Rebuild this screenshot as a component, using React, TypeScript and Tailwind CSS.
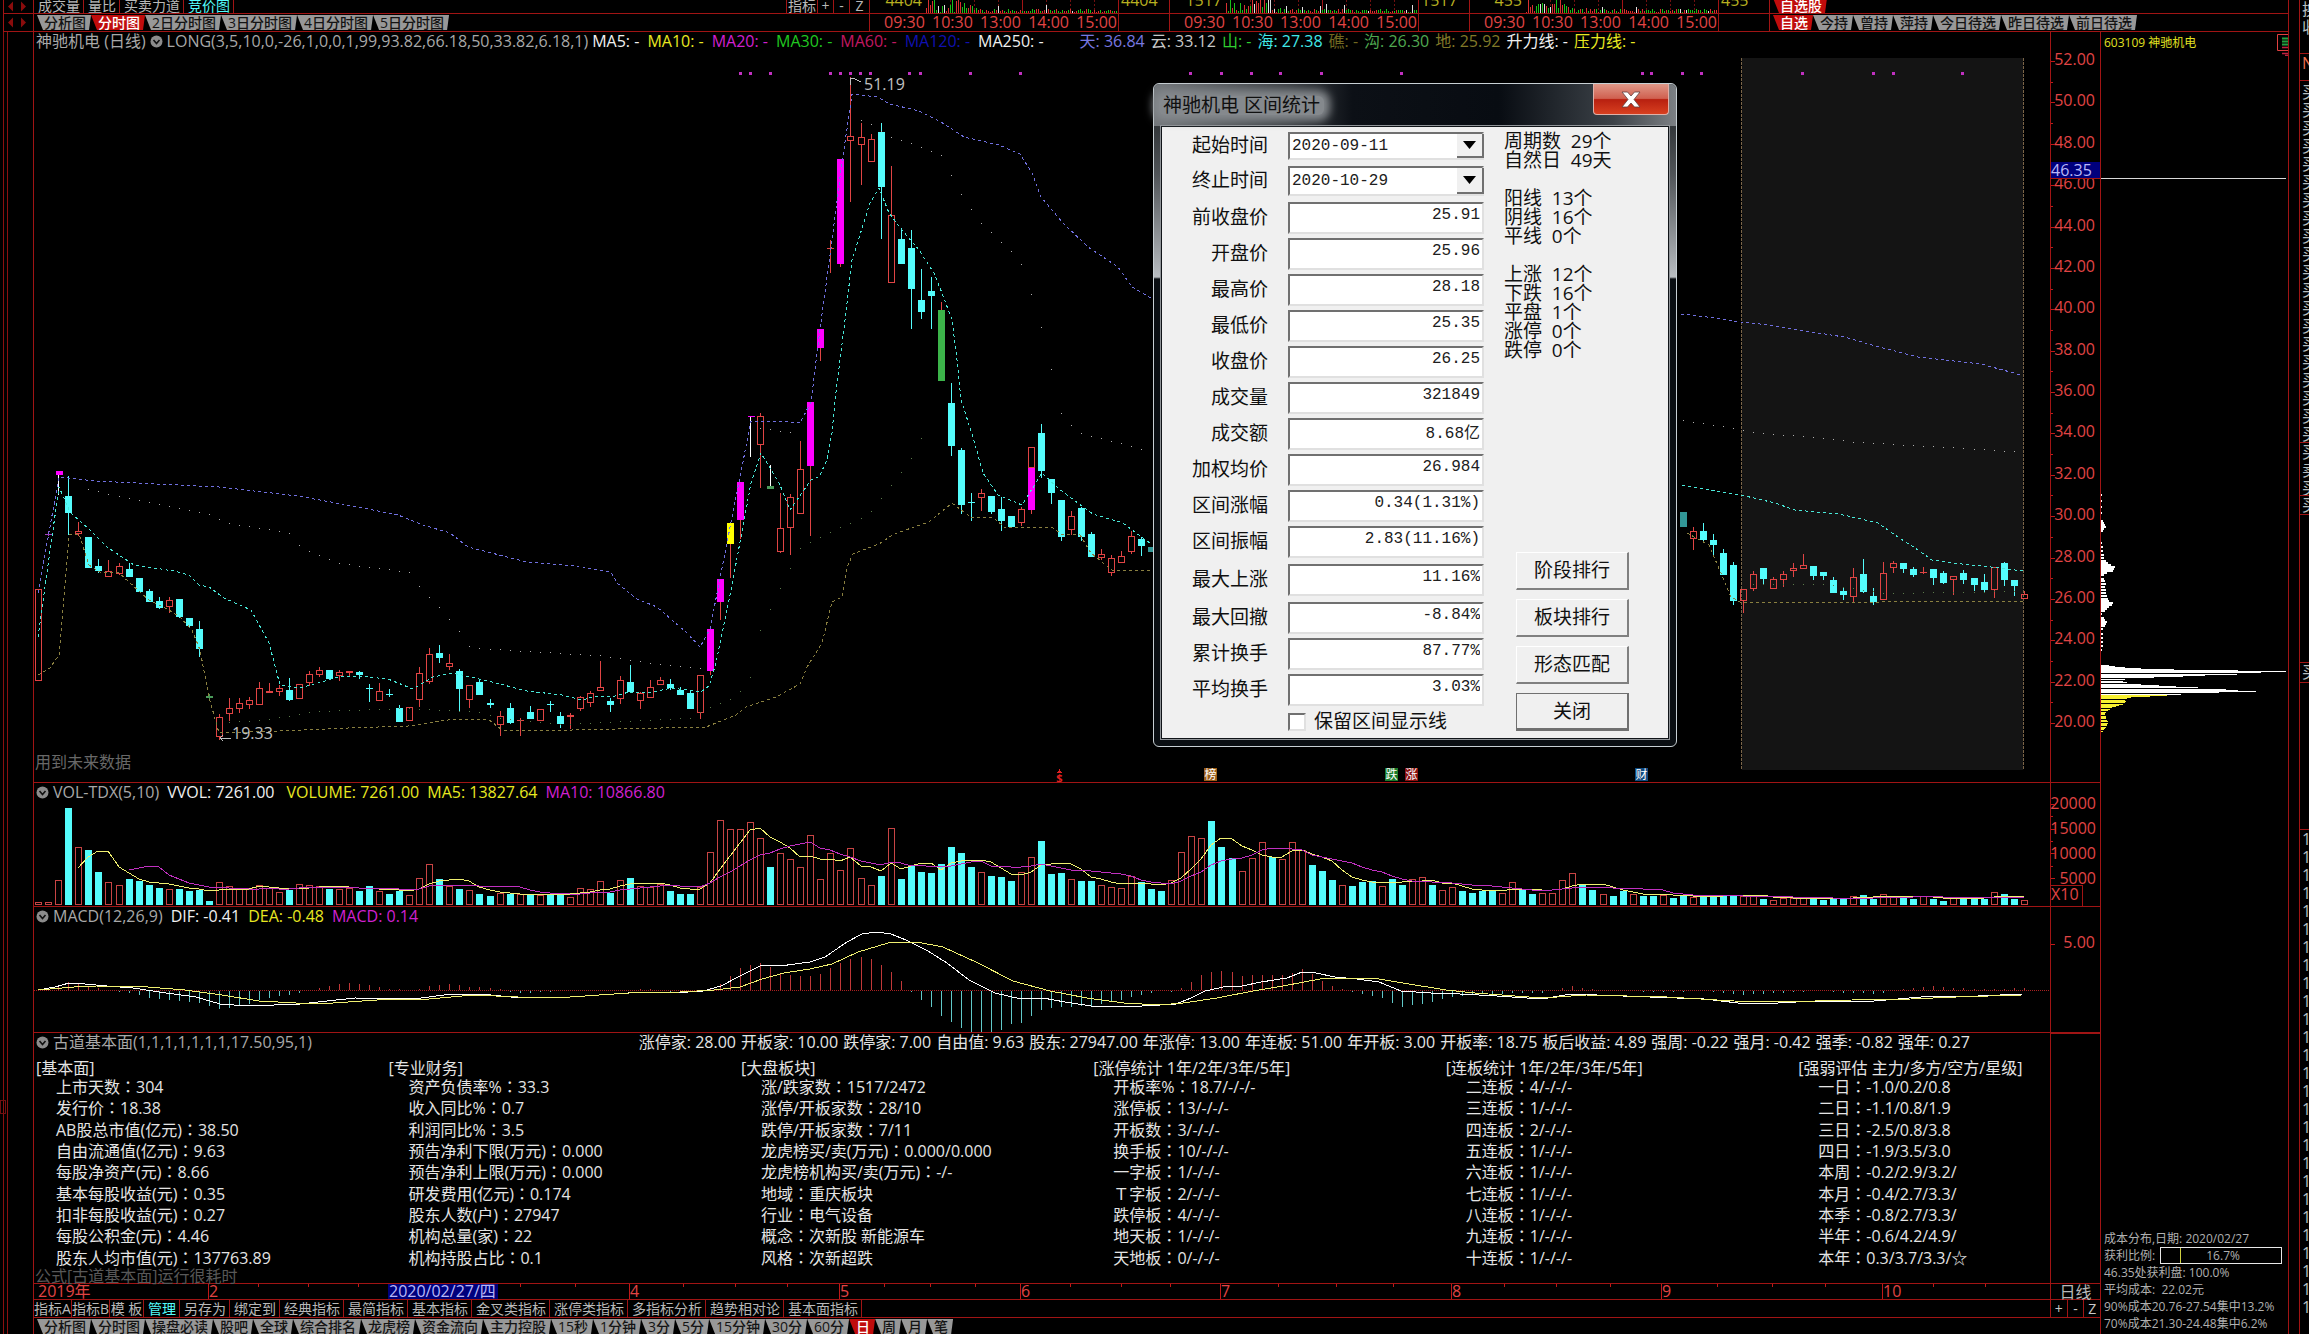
import React from 'react';

type Kind = 'r' | 'c' | 'm' | 'y' | 'g' | 'd' | 'x' | 'p';
type Candle = [number, Kind, number, number, number, number];
type Pt = [number, number];

const X0 = 38.3;
const STEP = 10.027;
const xAt = (i: number) => Math.round(X0 + STEP * i);

const COLORS: Record<Kind, string> = {
  r: '#e04444',
  c: '#54fcfc',
  m: '#ff00ff',
  y: '#ffff00',
  g: '#3cb44a',
  d: '#54fcfc',
  x: '#e04444',
  p: '#a040c0',
};

/* index, kind, high, body top, body bottom, low */
const CANDLES: Candle[] = [
  [0, 'r', 589, 589, 681, 681], [1, 'p', 531, 534, 534, 536], [3, 'c', 476, 496, 513, 535],
  [4, 'r', 522, 531, 534, 536], [5, 'c', 537, 537, 568, 568], [6, 'c', 559, 566, 571, 573], [7, 'r', 560, 571, 577, 577],
  [8, 'r', 563, 566, 574, 575], [9, 'c', 563, 569, 577, 577], [10, 'c', 578, 578, 592, 592], [11, 'c', 589, 591, 602, 602],
  [12, 'c', 597, 601, 608, 609], [13, 'r', 597, 600, 607, 613], [14, 'c', 599, 599, 617, 618], [15, 'c', 618, 618, 626, 628],
  [16, 'c', 621, 629, 649, 657], [18, 'r', 714, 717, 737, 740], [19, 'r', 698, 708, 714, 721],
  [20, 'r', 698, 703, 709, 713], [21, 'r', 697, 700, 705, 709], [22, 'r', 682, 688, 705, 705], [23, 'r', 683, 691, 693, 693],
  [24, 'r', 685, 688, 692, 696], [25, 'c', 678, 690, 700, 701], [26, 'r', 684, 684, 699, 699], [27, 'r', 671, 674, 683, 686],
  [28, 'r', 667, 670, 675, 677], [29, 'c', 670, 670, 679, 679], [30, 'r', 670, 672, 676, 681], [31, 'r', 671, 671, 673, 676],
  [32, 'c', 671, 672, 675, 679], [33, 'd', 684, 688, 688, 702], [34, 'r', 683, 691, 701, 701], [35, 'd', 689, 694, 694, 697],
  [36, 'c', 705, 708, 722, 722], [37, 'r', 707, 707, 721, 721], [38, 'r', 667, 673, 700, 707], [39, 'r', 648, 654, 682, 684],
  [40, 'c', 645, 653, 658, 663], [41, 'r', 654, 663, 667, 670], [42, 'c', 669, 671, 689, 712], [43, 'r', 685, 685, 700, 708],
  [44, 'c', 679, 682, 695, 695], [45, 'c', 699, 703, 705, 708], [46, 'r', 711, 716, 725, 736], [47, 'c', 703, 708, 723, 724],
  [48, 'x', 718, 720, 720, 736], [49, 'c', 706, 712, 719, 719], [50, 'r', 709, 709, 721, 721], [51, 'd', 701, 704, 704, 712],
  [52, 'c', 712, 716, 724, 728], [53, 'r', 713, 715, 717, 729], [54, 'r', 696, 697, 709, 711], [55, 'r', 691, 693, 703, 707],
  [56, 'r', 661, 687, 691, 691], [57, 'c', 698, 701, 705, 712], [58, 'r', 676, 680, 699, 704], [59, 'c', 665, 682, 692, 693],
  [60, 'r', 692, 693, 701, 709], [61, 'r', 680, 687, 698, 698], [62, 'r', 677, 680, 685, 685], [63, 'c', 679, 684, 688, 690],
  [64, 'c', 687, 690, 695, 695], [65, 'c', 691, 693, 709, 709], [66, 'r', 675, 675, 713, 719], [67, 'm', 629, 629, 671, 675],
  [68, 'm', 579, 579, 602, 620], [69, 'y', 523, 523, 544, 578], [70, 'm', 482, 482, 520, 539],
  [72, 'r', 413, 416, 445, 488], [74, 'r', 493, 528, 552, 553],
  [75, 'r', 494, 497, 528, 555], [76, 'r', 441, 469, 514, 514], [77, 'm', 402, 402, 466, 536], [78, 'm', 329, 329, 348, 361],
  [79, 'x', 240, 248, 248, 273], [80, 'm', 159, 159, 264, 267], [81, 'r', 77, 136, 141, 202], [82, 'r', 123, 137, 145, 185],
  [83, 'r', 134, 139, 162, 162], [84, 'c', 123, 132, 187, 239], [85, 'r', 166, 215, 283, 283], [86, 'c', 228, 239, 264, 264],
  [87, 'c', 230, 248, 289, 329], [88, 'c', 269, 300, 312, 319], [89, 'c', 277, 291, 296, 329], [90, 'g', 302, 310, 381, 381],
  [91, 'c', 383, 403, 446, 456], [92, 'c', 448, 450, 505, 514], [93, 'd', 493, 502, 502, 521], [94, 'r', 489, 493, 498, 511],
  [95, 'c', 496, 496, 512, 514], [96, 'c', 497, 509, 521, 531], [97, 'c', 516, 516, 527, 527], [98, 'r', 507, 509, 523, 526],
  [99, 'r', 447, 447, 468, 514], [99, 'm', 468, 468, 510, 514], [100, 'c', 424, 433, 471, 478], [101, 'c', 479, 479, 493, 504],
  [102, 'c', 500, 500, 537, 541], [103, 'r', 511, 516, 530, 535], [104, 'c', 507, 508, 537, 541], [105, 'c', 532, 534, 557, 557],
  [106, 'r', 549, 554, 558, 560], [107, 'r', 555, 558, 573, 576], [108, 'r', 551, 556, 563, 563], [109, 'r', 531, 536, 552, 554],
  [110, 'c', 537, 539, 546, 556], [111, 'c', 547, 547, 552, 552],
  [164, 'c', 512, 512, 527, 527], [165, 'r', 527, 531, 539, 550], [166, 'c', 523, 531, 540, 543], [167, 'c', 534, 540, 545, 557],
  [168, 'c', 549, 553, 575, 575], [169, 'c', 562, 565, 601, 605], [170, 'r', 589, 589, 601, 613], [171, 'r', 571, 574, 589, 591],
  [172, 'c', 568, 568, 579, 585], [173, 'r', 577, 579, 589, 589], [174, 'r', 571, 574, 580, 587], [175, 'r', 563, 568, 571, 577],
  [176, 'r', 554, 565, 569, 569], [177, 'c', 566, 566, 576, 580], [178, 'c', 572, 572, 576, 580], [179, 'c', 577, 580, 593, 593],
  [180, 'c', 588, 591, 595, 600], [181, 'r', 568, 577, 597, 602], [182, 'c', 559, 574, 592, 593], [183, 'c', 588, 596, 602, 605],
  [184, 'r', 562, 573, 600, 600], [185, 'r', 561, 563, 568, 573], [186, 'c', 563, 563, 569, 573], [187, 'c', 567, 569, 575, 577],
  [188, 'x', 567, 572, 572, 574], [189, 'c', 569, 569, 578, 585], [190, 'c', 571, 573, 583, 584], [191, 'r', 576, 576, 580, 595],
  [192, 'c', 570, 573, 580, 584], [193, 'c', 578, 578, 585, 591], [194, 'c', 574, 582, 590, 592], [195, 'r', 567, 567, 590, 598],
  [196, 'c', 562, 563, 580, 586], [197, 'c', 580, 580, 586, 596], [198, 'r', 591, 594, 599, 599],
];

const SKY: Pt[][] = [
  [[38, 593], [59, 477], [95, 481], [219, 487], [298, 496], [358, 507], [398, 515], [423, 525], [450, 533], [468, 547], [527, 562], [577, 566], [611, 572], [617, 583], [637, 599], [657, 607], [687, 633], [700, 647], [710, 629], [751, 421], [780, 421], [800, 423], [811, 402], [820, 329], [831, 248], [840, 177], [852, 94], [877, 97], [890, 104], [919, 111], [941, 122], [964, 137], [999, 145], [1020, 154], [1032, 173], [1041, 197], [1063, 223], [1088, 247], [1118, 267], [1132, 287], [1151, 298]],
  [[1681, 314], [1707, 317], [1741, 322], [1770, 325], [1805, 331], [1844, 337], [1883, 348], [1918, 357], [1981, 364], [2021, 375]],
];
const SEA: Pt[][] = [
  [[38, 637], [59, 487], [70, 512], [90, 530], [107, 547], [134, 565], [174, 571], [189, 575], [199, 585], [209, 587], [224, 598], [251, 610], [269, 643], [280, 685], [299, 688], [318, 683], [338, 677], [358, 676], [388, 679], [413, 689], [433, 677], [453, 673], [488, 681], [527, 691], [562, 695], [582, 700], [597, 696], [612, 697], [629, 692], [647, 693], [672, 688], [701, 692], [709, 686], [716, 663], [731, 590], [741, 537], [751, 483], [761, 453], [780, 485], [790, 510], [811, 480], [819, 477], [827, 460], [832, 433], [835, 400], [845, 320], [852, 260], [870, 203], [879, 188], [889, 213], [902, 230], [919, 250], [934, 273], [942, 293], [952, 320], [957, 360], [961, 400], [973, 437], [983, 473], [998, 495], [1022, 505], [1042, 473], [1058, 488], [1083, 507], [1093, 514], [1123, 523], [1140, 536], [1150, 543]],
  [[1682, 485], [1741, 495], [1775, 503], [1795, 510], [1839, 514], [1878, 523], [1898, 537], [1918, 550], [1932, 560], [1952, 563], [1991, 567], [2023, 571]],
];
const EARTH: Pt[][] = [
  [[38, 675], [50, 668], [59, 655], [69, 535], [79, 534], [89, 565], [100, 572], [119, 573], [149, 600], [169, 610], [180, 617], [192, 630], [200, 650], [209, 697], [219, 733], [279, 731], [348, 728], [408, 726], [448, 720], [488, 719], [502, 730], [527, 731], [617, 729], [706, 727], [736, 715], [746, 707], [776, 697], [800, 684], [807, 667], [822, 643], [832, 602], [842, 597], [847, 567], [853, 554], [879, 544], [894, 534], [929, 522], [952, 503], [961, 510], [971, 517], [993, 517], [1004, 527], [1052, 527], [1061, 534], [1080, 535], [1091, 553], [1113, 571], [1150, 570]],
  [[1687, 533], [1709, 545], [1731, 597], [1742, 603], [2023, 601]],
];
const CLOUD: Pt[][] = [
  [[79, 487], [128, 498], [189, 510], [209, 514], [229, 523], [291, 533], [300, 547], [318, 555], [338, 563], [409, 572], [419, 586], [439, 607], [459, 631], [470, 647], [522, 651], [597, 655], [652, 663], [706, 669]],
  [[760, 428], [799, 433]],
  [[861, 120], [870, 123], [890, 137], [910, 143], [941, 155], [962, 196], [981, 223], [1012, 252], [1022, 265], [1042, 330], [1062, 417], [1081, 433], [1142, 449]],
  [[1682, 420], [1741, 429], [1753, 432], [1834, 439], [1854, 442], [1952, 447], [2023, 452]],
];
const DITCH: Pt[][] = [
  [[220, 723], [269, 719], [318, 711], [408, 708], [480, 712], [500, 718], [560, 724], [690, 718], [701, 711], [736, 697], [750, 677], [760, 630], [780, 588], [800, 548], [829, 532], [869, 514], [910, 460], [921, 438]],
  [[1753, 584], [1824, 584], [1883, 593], [2023, 591]],
];
const PINK_DOTS = [740, 750, 770, 830, 840, 850, 860, 870, 909, 920, 970, 1020, 1190, 1221, 1251, 1280, 1321, 1401, 1642, 1651, 1682, 1701, 1802, 1873, 1893, 1962];

const VOL: number[] = [
  2, 2, 24, 97, 57, 55, 33, 22, 19, 26, 24, 20, 17, 15, 16, 14, 15, 4, 22, 18, 16, 16, 19, 16, 12, 15, 20, 19, 18, 16, 15, 16, 14, 19, 13, 11, 14, 9, 26, 40, 26, 18, 16, 14, 11, 9, 11, 11, 10, 11, 9, 11, 10, 7, 16, 15, 23, 12, 24, 27, 18, 17, 20, 14, 11, 11, 17, 52, 84, 75, 75, 82, 66, 38, 51, 45, 37, 69, 25, 51, 34, 56, 26, 19, 29, 76, 26, 39, 33, 32, 41, 58, 52, 38, 32, 29, 28, 24, 32, 47, 64, 31, 32, 25, 24, 24, 19, 17, 16, 28, 23, 16,
  14, 24, 52, 68, 66, 84, 58, 47, 33, 46, 62, 48, 45, 62, 54, 40, 34, 25, 19, 19, 23, 24, 18, 26, 20, 25, 27, 20, 14, 17, 14, 12, 14, 14, 11, 22, 16, 11, 11, 11, 24, 31, 21, 15, 10, 9, 14, 10, 9, 9, 9, 7, 9, 7, 8, 8, 10, 10, 8, 9, 6, 4, 6, 6, 6, 6, 5, 6, 6, 8, 10, 6, 10, 8, 8, 6, 8, 6, 4, 6, 6, 6, 6, 12, 11, 6, 4,
];
/* r: rising day, c: falling day */
const VOL_SIDE =
  'rrrcrccrrccccrcccc' +
  'rrrrrrrcrrrcrrccrc' +
  'crrrcrcrccrcrcrccr' +
  'rrrcrcrrrcccrrrrrr' +
  'rcrrrrrrrrrrcrcccc' +
  'ccccrcccrrcccrccrrrrcc' +
  'crrrrcccrrrcrrrcccrccc' +
  'rccrrcrrccccrrccrrrrcc' +
  'rccrccrccrccccrrcrrrrc' +
  'cccrccrrccrccrcccrccr';
const volUp = (i: number) => VOL_SIDE.charAt(i) === 'r';

const DIF: Pt[] = [[38, 990], [55, 987], [69, 983], [85, 984], [107, 986], [133, 988], [159, 992], [196, 997], [220, 1004], [248, 1006], [274, 1005], [300, 1004], [318, 1002], [355, 998], [414, 999], [451, 994], [481, 994], [521, 998], [570, 997], [614, 994], [643, 992], [673, 993], [703, 991], [721, 986], [740, 976], [762, 965], [780, 966], [810, 962], [825, 957], [847, 942], [862, 934], [876, 932], [891, 934], [906, 940], [928, 951], [947, 963], [969, 980], [995, 993], [1021, 999], [1043, 998], [1065, 1002], [1091, 1006], [1124, 1007], [1160, 1005], [1176, 1004], [1191, 998], [1205, 991], [1228, 986], [1242, 986], [1261, 982], [1287, 978], [1302, 972], [1316, 973], [1335, 977], [1357, 979], [1379, 982], [1401, 991], [1431, 993], [1460, 994], [1497, 996], [1542, 999], [1571, 994], [1623, 996], [1704, 999], [1738, 1003], [1778, 1003], [1815, 1001], [1874, 1001], [1933, 996], [1978, 996], [2022, 994]];
const DEA: Pt[] = [[38, 990], [74, 987], [96, 986], [148, 987], [185, 990], [222, 995], [259, 1001], [296, 1003], [333, 1003], [392, 999], [429, 999], [473, 995], [518, 997], [570, 997], [629, 993], [680, 992], [714, 990], [740, 987], [762, 979], [784, 973], [810, 969], [832, 964], [858, 952], [888, 943], [917, 942], [943, 947], [976, 962], [1013, 981], [1050, 991], [1087, 998], [1124, 1003], [1160, 1005], [1183, 1003], [1217, 998], [1253, 991], [1283, 986], [1320, 979], [1350, 978], [1379, 979], [1409, 984], [1446, 990], [1475, 993], [1542, 998], [1586, 995], [1667, 997], [1734, 1001], [1778, 1002], [1852, 1000], [1911, 999], [1956, 997], [2022, 995]];

const str = (p: Pt[]) => p.map((q) => q.join(',')).join(' ');
function sample(p: Pt[], x: number) {
  for (let k = 1; k < p.length; k++) {
    if (x <= p[k][0]) {
      const [ax, ay] = p[k - 1];
      const [bx, by] = p[k];
      return ay + ((by - ay) * (x - ax)) / (bx - ax);
    }
  }
  return p[p.length - 1][1];
}
function movingAverage(n: number): Pt[] {
  const out: Pt[] = [];
  for (let i = n - 1; i < VOL.length; i++) {
    let s = 0;
    for (let k = 0; k < n; k++) s += VOL[i - k];
    out.push([xAt(i), Math.round(904 - s / n)]);
  }
  return out;
}

function CandleShape({ c }: { c: Candle }) {
  const [i, kind, hi, top, bot, lo] = c;
  const x = xAt(i);
  const color = COLORS[kind];
  if (kind === 'd' || kind === 'x' || kind === 'p')
    return (
      <g fill={color}>
        <rect x={x} y={hi} width={1} height={lo - hi} />
        <rect x={x - 3} y={top} width={7} height={1} />
      </g>
    );
  if (kind === 'r')
    return (
      <g fill={color}>
        <rect x={x} y={hi} width={1} height={top - hi} />
        <rect x={x} y={bot} width={1} height={lo - bot} />
        <rect x={x - 2.5} y={top + 0.5} width={6} height={Math.max(bot - top - 1, 1)} fill="none" stroke={color} />
      </g>
    );
  return (
    <g opacity={i === 164 || i === 111 ? 0.6 : 1}>
      <rect x={x} y={hi} width={1} height={lo - hi} fill={kind === 'c' ? color : '#e04444'} />
      <rect x={x - 3} y={top} width={7} height={bot - top} fill={color} />
    </g>
  );
}

function Dots({ line, color }: { line: Pt[]; color: string }) {
  const from = line[0][0];
  const to = line[line.length - 1][0];
  const xs: number[] = [];
  for (let i = 0; i < 199; i++) if (xAt(i) >= from && xAt(i) <= to) xs.push(xAt(i));
  return (
    <g fill={color}>
      {xs.map((x) => (
        <rect key={x} x={x} y={Math.round(sample(line, x))} width={1} height={1} />
      ))}
    </g>
  );
}

const chartFont = { fontFamily: '"Open Sans", "Noto Sans CJK SC", sans-serif' };

function Mark({ x, fill, children }: { x: number; fill: string; children: string }) {
  return (
    <g>
      <rect x={x} y={768} width={13} height={13} fill={fill} />
      <text x={x + 6.5} y={779} fontSize={12} fill="#fff" textAnchor="middle" style={chartFont}>{children}</text>
    </g>
  );
}

function PriceChart() {
  return (
    <svg className="absolute inset-0 h-full w-full" viewBox="34 32 2016 750" preserveAspectRatio="none" shapeRendering="crispEdges">
      <rect x={1742} y={58} width={281} height={712} fill="#141414" />
      <path d="M1741.5 58V770M2023.5 58V770" stroke="#7a6448" strokeDasharray="3 1" fill="none" />
      {PINK_DOTS.map((x) => <rect key={x} x={x - 1} y={72} width={3} height={3} fill="#c030c0" />)}
      {CANDLES.map((c, k) => <CandleShape key={k} c={c} />)}
      <g fill="#ff00ff">
        <rect x={56} y={471} width={7} height={4} />
        <rect x={748} y={416} width={7} height={1} />
      </g>
      <g fill="#ffffff">
        <rect x={58} y={475} width={1} height={20} />
        <rect x={750} y={417} width={1} height={40} />
        <rect x={770} y={465} width={1} height={21} />
      </g>
      <g fill="#4a9a5a">
        <rect x={767} y={486} width={7} height={3} />
        <rect x={206} y={696} width={7} height={2} />
        <rect x={209} y={694} width={1} height={6} />
      </g>
      <g fill="none" strokeWidth={1}>
        {SKY.map((l, k) => <polyline key={k} points={str(l)} stroke="#7070e0" strokeDasharray="3 3" />)}
        {SEA.map((l, k) => <polyline key={k} points={str(l)} stroke="#48e8d8" strokeDasharray="3 3" />)}
        {EARTH.map((l, k) => <polyline key={k} points={str(l)} stroke="#8a8040" strokeDasharray="3 3" />)}
      </g>
      {CLOUD.map((l, k) => <Dots key={k} line={l} color="#b0b0b0" />)}
      {DITCH.map((l, k) => <Dots key={k} line={l} color="#5a7a4a" />)}
      <path d="M850.5 85V78H853M853 78L861 82" stroke="#c0c0c0" fill="none" />
      <path d="M220 738H231M220 738L223 735M220 738L223 741" stroke="#c0c0c0" fill="none" />
      <g fontSize={16} fill="#c0c0c0" style={chartFont}>
        <text x={864} y={90}>51.19</text>
        <text x={232} y={739}>19.33</text>
      </g>
      <g fill="#e02020">
        <path d="M1059.5 769L1062 773H1057Z" />
        <text x={1059.5} y={782} fontSize={11} fontWeight={700} textAnchor="middle" style={chartFont}>$</text>
      </g>
      <Mark x={1204} fill="#9a5c18">榜</Mark>
      <Mark x={1385} fill="#1a7a2a">跌</Mark>
      <Mark x={1405} fill="#8a1010">涨</Mark>
      <Mark x={1635} fill="#104a80">财</Mark>
    </svg>
  );
}

function VolumeChart() {
  return (
    <svg className="absolute inset-0 h-full w-full" viewBox="34 783 2016 123" preserveAspectRatio="none" shapeRendering="crispEdges">
      {VOL.map((h, i) =>
        volUp(i) ? (
          <rect key={i} x={xAt(i) - 2.5} y={904.5 - h} width={6} height={h} fill="none" stroke="#c84444" />
        ) : (
          <rect key={i} x={xAt(i) - 3} y={905 - h} width={7} height={h} fill="#54fcfc" />
        ),
      )}
      <polyline points={str(movingAverage(5))} fill="none" stroke="#f0f070" />
      <polyline points={str(movingAverage(10))} fill="none" stroke="#c030c0" />
    </svg>
  );
}

function MacdChart() {
  return (
    <svg className="absolute inset-0 h-full w-full" viewBox="34 907 2016 125" preserveAspectRatio="none" shapeRendering="crispEdges">
      <path d="M34 990.5H2050" stroke="#a82020" strokeDasharray="1 1" />
      {VOL.map((_, i) => {
        const x = xAt(i);
        const d = Math.round(2 * (sample(DEA, x) - sample(DIF, x)));
        return d > 0 ? (
          <rect key={i} x={x} y={990 - d} width={1} height={d} fill="#c03838" />
        ) : (
          <rect key={i} x={x} y={991} width={1} height={-d} fill="#60c8c8" />
        );
      })}
      <polyline points={str(DIF)} fill="none" stroke="#ffffff" />
      <polyline points={str(DEA)} fill="none" stroke="#f0f070" />
    </svg>
  );
}

function Chevron() {
  return (
    <svg className="h-[13px] w-[13px] shrink-0" viewBox="0 0 13 13">
      <circle cx="6.5" cy="6.5" r="6" fill="#8c8c8c" />
      <path d="M3.5 5L6.5 8.5L9.5 5" fill="none" stroke="#101010" strokeWidth="1.6" />
    </svg>
  );
}

function Axis({ children, className = '' }: { children?: React.ReactNode; className?: string }) {
  return <div className={'relative w-[51px] shrink-0 border-x border-[#a01414] text-base text-[#e04444] ' + className}>{children}</div>;
}

function Ticks({ from, step, count, height }: { from: number; step: number; count: number; height: number }) {
  return (
    <svg className="absolute inset-0 h-full w-full" viewBox={`0 0 49 ${height}`} preserveAspectRatio="none" shapeRendering="crispEdges">
      {Array.from({ length: count }, (_, k) => (
        <rect key={k} x={0} y={Math.round(from + step * k)} width={k % 2 ? 2 : 4} height={1} fill="#c01818" />
      ))}
    </svg>
  );
}

function Tab({ children, active = false }: { children: string; active?: boolean }) {
  return (
    <button
      type="button"
      className={
        'h-[15px] shrink-0 whitespace-nowrap pl-[7px] pr-[5px] text-sm leading-[15px] font-medium [clip-path:polygon(0_0,100%_0,calc(100%-2px)_100%,6px_100%)] ' +
        (active ? 'bg-[#c00c0c] text-white' : 'bg-[#989898] text-[#141414]')
      }
    >
      {children}
    </button>
  );
}

function Cell({ children, active = false }: { children: string; active?: boolean }) {
  return (
    <button
      type="button"
      className={'h-full shrink-0 whitespace-nowrap border-r border-[#a01414] pl-1 pr-[3px] text-sm leading-[17px] ' + (active ? 'text-[#54fcfc]' : 'text-[#b8b8b8]')}
    >
      {children}
    </button>
  );
}

function Arrows() {
  return (
    <svg className="absolute left-[3px] top-0 h-[13px] w-[20px]" viewBox="0 0 20 13">
      <path d="M1 6.5L6 1.5V11.5ZM19 6.5L14 1.5V11.5Z" fill="#8a0c0c" />
    </svg>
  );
}

const TIMES = ['09:30', '10:30', '13:00', '14:00', '15:00'];

function MiniVolume({ seed }: { seed: number }) {
  let s = seed;
  const rnd = () => {
    s = (s * 1103515245 + 12345) % 2147483648;
    return s / 2147483648;
  };
  const bars = Array.from({ length: 96 }, (_, k) => {
    const early = Math.exp(-k / 12) * 12 + (Math.abs(k - 18) < 6 ? 8 : 0);
    const r = rnd();
    return { h: Math.min(13, Math.round(rnd() * (3 + early) + 1 + (r > 0.93 ? 5 : 0))), c: r < 0.45 ? '#18c018' : r < 0.9 ? '#d83030' : '#e0e0e0' };
  });
  return (
    <svg className="h-full w-full" viewBox="0 0 192 13" preserveAspectRatio="none" shapeRendering="crispEdges">
      <path d="M24.5 0V13M48.5 0V13M72.5 0V13M120.5 0V13M144.5 0V13M168.5 0V13" stroke="#701010" strokeDasharray="2 2" />
      <path d="M96.5 0V13" stroke="#a01414" />
      {bars.map((b, k) => <rect key={k} x={k * 2} y={13 - b.h} width={1} height={b.h} fill={b.c} />)}
    </svg>
  );
}

function MiniPanel({ label, seed }: { label: string; seed: number }) {
  return (
    <div className="flex w-[300px] shrink-0 flex-col border-l border-[#a01414]">
      <div className="flex h-[14px] overflow-hidden border-b border-[#a01414] text-base leading-4 text-[#b8b020]">
        <span className="-mt-2 w-[56px] pr-1 text-right">{label}</span>
        <div className="w-[192px]"><MiniVolume seed={seed} /></div>
        <div className="flex-1 border-l border-[#a01414] pl-[2px]"><p className="-mt-2">{label}</p></div>
      </div>
      <div className="flex h-[18px] border-b border-[#a01414] text-base leading-[17px] text-[#e04444]">
        <div className="flex w-[249px] justify-between border-r border-[#a01414] pl-[14px] pr-[1px]">
          {TIMES.map((t) => <span key={t}>{t}</span>)}
        </div>
      </div>
    </div>
  );
}

function Field({ label, value }: { label: string; value: string }) {
  return (
    <label className="flex h-8 items-center">
      <span className="w-[106px] pb-[2px] text-right">{label}</span>
      <input
        readOnly
        defaultValue={value}
        className="ml-5 h-8 w-[196px] border-2 border-b-[#e0e0e0] border-l-[#707070] border-r-[#e0e0e0] border-t-[#707070] bg-white pb-[6px] pr-[2px] text-right font-['Liberation_Mono','Noto_Sans_CJK_SC',monospace] text-base text-[#202020] outline-none"
      />
    </label>
  );
}

function DateField({ label, value, className }: { label: string; value: string; className: string }) {
  return (
    <label className={'relative flex items-center ' + className}>
      <span className="w-[106px] pb-[2px] text-right">{label}</span>
      <select
        defaultValue={value}
        className="ml-5 h-full w-[196px] appearance-none border-2 border-b-[#e0e0e0] border-l-[#707070] border-r-[#e0e0e0] border-t-[#707070] bg-white pl-[2px] font-['Liberation_Mono',monospace] text-base text-[#202020] outline-none"
      >
        <option>{value}</option>
      </select>
      <span className="pointer-events-none absolute bottom-[2px] right-0 top-[2px] flex w-[27px] items-center justify-center border-b-2 border-r-2 border-[#707070] bg-[#f0f0f0]">
        <svg className="h-[8px] w-[13px]" viewBox="0 0 13 8"><path d="M0 0H13L6.5 8Z" fill="#000" /></svg>
      </span>
    </label>
  );
}

function DialogButton({ children, strong = false }: { children: string; strong?: boolean }) {
  return (
    <button
      type="button"
      className={
        'h-[38px] w-[113px] bg-[#f0f0f0] ' +
        (strong
          ? 'border-b-[3px] border-l border-r-2 border-t border-[#707070]'
          : 'border-b-2 border-l border-r-2 border-t border-b-[#808080] border-l-white border-r-[#808080] border-t-white')
      }
    >
      {children}
    </button>
  );
}

const STATS = ['周期数 29个', '自然日 49天', '', '阳线 13个', '阴线 16个', '平线 0个', '', '上涨 12个', '下跌 16个', '平盘 1个', '涨停 0个', '跌停 0个'];
const FIELDS: [string, string][][] = [
  [['前收盘价', '25.91'], ['开盘价', '25.96'], ['最高价', '28.18'], ['最低价', '25.35'], ['收盘价', '26.25'], ['成交量', '321849'], ['成交额', '8.68亿'], ['加权均价', '26.984'], ['区间涨幅', '0.34(1.31%)'], ['区间振幅', '2.83(11.16%)']],
  [['最大上涨', '11.16%']],
  [['最大回撤', '-8.84%'], ['累计换手', '87.77%'], ['平均换手', '3.03%']],
];

function StatsDialog() {
  return (
    <section
      role="dialog"
      aria-label="神驰机电 区间统计"
      className="absolute left-[1119px] top-[51px] z-10 w-[524px] rounded-md border border-[#c8d0d4] bg-[linear-gradient(180deg,#4a4e52_0px,#34383b_44px,#505458_90px,#b8bcc0_193px,#0a0e12_195px,#0a0e12_100%)] px-[7px] pb-[7px] text-[19px] leading-[19px] text-[#101010]"
    >
      <div className="-mx-[7px] flex h-[42px] items-center justify-between rounded-t-md bg-[linear-gradient(90deg,#74787c_0%,#3a3e42_26%,#0c1016_38%,#080c12_66%,#3c4248_88%,#7c8084_100%)] pl-[5px]">
        <h2 className="rounded-md bg-[#85898d] px-1 shadow-[0_0_8px_6px_#85898d]">神驰机电 区间统计</h2>
        <button type="button" aria-label="关闭窗口" className="mr-[7px] flex h-[31px] w-[76px] items-center justify-center self-start rounded-b border border-t-0 border-[#e0b0a8] bg-[linear-gradient(180deg,#e09888_0%,#d06050_48%,#b82010_52%,#d84020_100%)]">
          <svg className="h-[17px] w-[20px]" viewBox="0 0 20 17">
            <path d="M1 1H6.5L10 5L13.500 1H19L13 8.500L19 16H13.500L10 12L6.500 16H1L7 8.500Z" fill="#fff" stroke="#604040" strokeWidth="0.8" />
          </svg>
        </button>
      </div>
      <div className="flex border border-[#101418] bg-[#f0f0f0] pb-[7px] pt-[5px] outline outline-[#909498]">
        <form className="flex flex-col gap-[6px]">
          <DateField label="起始时间" value="2020-09-11" className="h-7" />
          <DateField label="终止时间" value="2020-10-29" className="h-[30px]" />
          {FIELDS.map((g, k) => (
            <div key={k} className="flex flex-col gap-1">
              {g.map(([l, v]) => <Field key={l} label={l} value={v} />)}
            </div>
          ))}
          <label className="ml-[126px] flex items-center gap-2">
            <input type="checkbox" className="h-[18px] w-[18px] appearance-none border-2 border-b-[#e0e0e0] border-l-[#707070] border-r-[#e0e0e0] border-t-[#707070] bg-white" />
            保留区间显示线
          </label>
        </form>
        <div className="ml-5 flex flex-col">
          <ul>
            {STATS.map((s, k) => <li key={k} className="h-[19px] whitespace-pre">{s.replace(' ', '  ')}</li>)}
          </ul>
          <div className="ml-3 mt-auto flex flex-col gap-[9px]">
            <DialogButton>阶段排行</DialogButton>
            <DialogButton>板块排行</DialogButton>
            <DialogButton>形态匹配</DialogButton>
            <DialogButton strong>关闭</DialogButton>
          </div>
        </div>
      </div>
    </section>
  );
}

const BASICS: { title: string; rows: [string, string][] }[] = [
  { title: '[基本面]', rows: [['上市天数', '304'], ['发行价', '18.38'], ['AB股总市值(亿元)', '38.50'], ['自由流通值(亿元)', '9.63'], ['每股净资产(元)', '8.66'], ['基本每股收益(元)', '0.35'], ['扣非每股收益(元)', '0.27'], ['每股公积金(元)', '4.46'], ['股东人均市值(元)', '137763.89']] },
  { title: '[专业财务]', rows: [['资产负债率%', '33.3'], ['收入同比%', '0.7'], ['利润同比%', '3.5'], ['预告净利下限(万元)', '0.000'], ['预告净利上限(万元)', '0.000'], ['研发费用(亿元)', '0.174'], ['股东人数(户)', '27947'], ['机构总量(家)', '22'], ['机构持股占比', '0.1']] },
  { title: '[大盘板块]', rows: [['涨/跌家数', '1517/2472'], ['涨停/开板家数', '28/10'], ['跌停/开板家数', '7/11'], ['龙虎榜买/卖(万元)', '0.000/0.000'], ['龙虎榜机构买/卖(万元)', '-/-'], ['地域', '重庆板块'], ['行业', '电气设备'], ['概念', '次新股 新能源车'], ['风格', '次新超跌']] },
  { title: '[涨停统计 1年/2年/3年/5年]', rows: [['开板率%', '18.7/-/-/-'], ['涨停板', '13/-/-/-'], ['开板数', '3/-/-/-'], ['换手板', '10/-/-/-'], ['一字板', '1/-/-/-'], ['Ｔ字板', '2/-/-/-'], ['跌停板', '4/-/-/-'], ['地天板', '1/-/-/-'], ['天地板', '0/-/-/-']] },
  { title: '[连板统计 1年/2年/3年/5年]', rows: [['二连板', '4/-/-/-'], ['三连板', '1/-/-/-'], ['四连板', '2/-/-/-'], ['五连板', '1/-/-/-'], ['六连板', '1/-/-/-'], ['七连板', '1/-/-/-'], ['八连板', '1/-/-/-'], ['九连板', '1/-/-/-'], ['十连板', '1/-/-/-']] },
  { title: '[强弱评估 主力/多方/空方/星级]', rows: [['一日', '-1.0/0.2/0.8'], ['二日', '-1.1/0.8/1.9'], ['三日', '-2.5/0.8/3.8'], ['四日', '-1.9/3.5/3.0'], ['本周', '-0.2/2.9/3.2/'], ['本月', '-0.4/2.7/3.3/'], ['本季', '-0.8/2.7/3.3/'], ['半年', '-0.6/4.2/4.9/'], ['本年', '0.3/3.7/3.3/☆']] },
];

const MONTHS: [number, string][] = [[208, '2'], [629, '4'], [839, '5'], [1020, '6'], [1220, '7'], [1451, '8'], [1661, '9'], [1882, '10']];
const MINOR = [258, 308, 358, 520, 575, 683, 735, 787, 884, 930, 975, 1070, 1121, 1170, 1278, 1336, 1393, 1504, 1556, 1610, 1717, 1772, 1825, 1933, 1985];

/* y, width */
const CHIPS_THIN: Pt[] = [
  [494, 1], [500, 1], [506, 1], [512, 1], [520, 2], [522, 3], [524, 4], [526, 5], [528, 3], [530, 2], [542, 1], [546, 2], [550, 2], [554, 3], [557, 3], [560, 5], [562, 7], [564, 10], [566, 14], [568, 13], [570, 12], [572, 6], [574, 3],
  [578, 3], [580, 4], [583, 5], [586, 4], [589, 5], [592, 5], [595, 6], [598, 7], [600, 8], [602, 12], [604, 11], [606, 8], [608, 6], [610, 4], [613, 1], [617, 3], [619, 4], [621, 6], [623, 5], [625, 4], [628, 2], [633, 2], [637, 2], [641, 2], [645, 2], [649, 1],
];
const CHIPS: Pt[] = [
  [665, 8], [666, 14], [667, 24], [668, 40], [669, 73], [670, 137], [671, 185], [672, 160], [674, 136], [675, 104], [676, 82], [677, 53], [679, 24], [681, 22], [682, 26], [684, 40], [685, 58], [686, 75], [687, 97], [689, 125], [690, 137], [691, 155], [692, 118], [694, 80],
];
const CHIPS_LOW: Pt[] = [[695, 66], [696, 49], [697, 30], [698, 26], [700, 24], [701, 25], [702, 24], [704, 22], [705, 18], [706, 15], [707, 11], [709, 9], [710, 7], [712, 5], [713, 4], [714, 4], [716, 5], [717, 5], [718, 5], [720, 6], [721, 7], [723, 7], [724, 6], [725, 6], [727, 5], [728, 4], [729, 3], [731, 2]];

function CostPanel() {
  return (
    <aside className="relative flex w-[188px] shrink-0 flex-col overflow-hidden border-r border-[#a01414] text-xs leading-[17px] text-[#b0b0b0]">
      <svg className="absolute inset-0 h-full w-full" viewBox="0 32 187 1302" preserveAspectRatio="none" shapeRendering="crispEdges">
        <rect x={0} y={178} width={185} height={1} fill="#d8d8d8" />
        {CHIPS_THIN.map(([y, w]) => <rect key={y} x={0} y={y} width={w} height={2} fill="#fff" />)}
        {CHIPS.map(([y, w]) => <rect key={y} x={0} y={y} width={w} height={1} fill="#fff" />)}
        {CHIPS_LOW.map(([y, w]) => <rect key={y} x={0} y={y} width={w} height={1} fill="#f8f030" />)}
      </svg>
      <div className="flex items-start justify-between pl-[3px] pt-[2px]">
        <h2 className="text-[#e0e020]">603109 神驰机电</h2>
        <svg className="h-[22px] w-[11px]" viewBox="0 0 11 22">
          <path d="M11 .5H.5V16.500H11" fill="none" stroke="#e04040" />
          <path d="M5 4.500H11M5 7.500H11M5 10.500H11" stroke="#20a040" strokeWidth="2" />
          <path d="M5 13.500H11M5 19.500H11M8 21.500H11" stroke="#c02040" strokeWidth="1.500" />
        </svg>
      </div>
      <div className="mt-auto whitespace-nowrap pb-[2px] pl-[3px]">
        <p>成本分布,日期: 2020/02/27</p>
        <p className="flex">
          <span>获利比例:</span>
          <span className="ml-[5px] mr-[6px] flex flex-1 border border-[#e8e8e8]">
            <span className="w-[20px] border-r border-[#d0d040]" />
            <span className="flex-1 pr-4 text-center leading-[15px]">16.7%</span>
          </span>
        </p>
        <p>46.35处获利盘: 100.0%</p>
        <p>平均成本: &nbsp;22.02元</p>
        <p>90%成本20.76-27.54集中13.2%</p>
        <p>70%成本21.30-24.48集中6.2%</p>
      </div>
    </aside>
  );
}

function Sliver() {
  return (
    <aside className="w-[10px] shrink-0 overflow-hidden border-l border-[#a01414] text-base leading-[18px] text-[#b8c0c0]">
      <div className="h-[54px] border-b border-[#a01414] pl-[2px]">
        <p className="h-[18px]">换</p>
        <p className="h-[18px]">收</p>
      </div>
      <p className="h-[27px] border-b border-[#a01414] pl-[2px] text-[#f07050]">N</p>
      <div className="h-[362px] border-b border-[#a01414] pl-[2px] pt-[2px]">
        {Array.from({ length: 20 }, (_, k) => <p key={k}>买</p>)}
      </div>
      <div className="h-[53px] overflow-hidden border-b border-[#a01414] pl-[2px]"><p>买</p><p>卖</p><p>买</p></div>
      <div className="h-[19px] border-b border-[#a01414] pl-[2px]">买</div>
      <div className="h-[148px] border-b border-[#a01414]" />
      <div className="h-[20px] border-b border-[#a01414] pl-[2px]">买</div>
      <div className="h-[147px] border-b border-[#a01414]" />
      <div className="pl-[2px]">
        {Array.from({ length: 27 }, (_, k) => <p key={k}>1</p>)}
      </div>
    </aside>
  );
}

const MAIN_HEAD: [string, string][] = [
  ['MA5: -', 'text-[#f0f0f0]'], ['MA10: -', 'text-[#e8e820]'], ['MA20: -', 'text-[#d020d0]'], ['MA30: -', 'text-[#20c820]'],
  ['MA60: -', 'text-[#c01860]'], ['MA120: -', 'text-[#1010b0]'], ['MA250: -', 'text-[#f0f0f0]'],
];
const MAIN_LINES: [string, string][] = [
  ['天: 36.84', 'text-[#7878e0]'], ['云: 33.12', 'text-[#c8c8c8]'], ['山: -', 'text-[#30d030]'], ['海: 27.38', 'text-[#40e8e8]'],
  ['礁: -', 'text-[#706820]'], ['沟: 26.30', 'text-[#50a850]'], ['地: 25.92', 'text-[#807828]'], ['升力线: -', 'text-[#f0f0f0]'], ['压力线: -', 'text-[#e8e820]'],
];
const BASIC_HEAD = ['涨停家: 28.00', '开板家: 10.00', '跌停家: 7.00', '自由值: 9.63', '股东: 27947.00', '年涨停: 13.00', '年连板: 51.00', '年开板: 3.00', '开板率: 18.75', '板后收益: 4.89', '强周: -0.22', '强月: -0.42', '强季: -0.82', '强年: 0.27'];

export default function App() {
  return (
    <div className="flex min-h-screen overflow-hidden bg-black font-['Open_Sans','Noto_Sans_CJK_SC',sans-serif]">
      <div className="relative w-[33px] shrink-0">
        <div className="absolute inset-y-0 left-[3px] w-[5px] border-x border-[#8a1010]" />
        <div className="relative ml-[3px] h-[14px] border-b border-l border-[#a01414] bg-black"><Arrows /></div>
        <div className="relative ml-[3px] h-[18px] border-b border-l border-[#a01414] bg-black pt-[2px]"><div className="relative"><Arrows /></div></div>
        <div className="absolute left-0 top-[1100px] h-[14px] w-[6px] border border-[#701010]" />
      </div>

      <div className="flex min-w-0 flex-1 flex-col border-l border-[#a01414]">
        <header className="flex h-8 border-r border-[#a01414]">
          <div className="flex min-w-0 flex-1 flex-col">
            <div className="flex h-[14px] overflow-hidden border-b border-[#a01414]">
              <nav className="-mt-1 flex h-[18px]">
                <Cell>成交量</Cell><Cell>量比</Cell><Cell>买卖力道</Cell><Cell active>竞价图</Cell>
              </nav>
              <nav className="-mt-1 ml-auto flex h-[18px] border-l border-[#a01414] text-sm leading-[17px] text-[#b8b8b8]">
                <button type="button" className="w-[31px] border-r border-[#a01414]">指标</button>
                <button type="button" className="w-4 border-r border-[#a01414]">+</button>
                <button type="button" className="w-4 border-r border-[#a01414]">-</button>
                <button type="button" className="w-[19px]">Z</button>
              </nav>
            </div>
            <nav className="flex h-[18px] border-b border-[#a01414] pl-[3px] pt-[1px]">
              <Tab>分析图</Tab><Tab active>分时图</Tab><Tab>2日分时图</Tab><Tab>3日分时图</Tab><Tab>4日分时图</Tab><Tab>5日分时图</Tab>
            </nav>
          </div>
          <MiniPanel label="4404" seed={7} />
          <MiniPanel label="1517" seed={23} />
          <MiniPanel label="455" seed={91} />
          <div className="flex w-[519px] shrink-0 flex-col border-l border-[#a01414]">
            <nav className="flex h-[14px] items-end border-b border-[#a01414] pl-[3px]"><Tab active>自选股</Tab></nav>
            <nav className="flex h-[18px] border-b border-[#a01414] pl-[3px] pt-[1px]">
              <Tab active>自选</Tab><Tab>今持</Tab><Tab>曾持</Tab><Tab>萍持</Tab><Tab>今日待选</Tab><Tab>昨日待选</Tab><Tab>前日待选</Tab>
            </nav>
          </div>
        </header>

        <div className="flex flex-1">
          <main className="flex min-w-0 flex-1 flex-col">
            <section className="relative flex min-h-[751px] flex-1 border-b border-[#a01414]">
              <div className="relative min-w-0 flex-1">
                <PriceChart />
                <div className="relative flex items-center whitespace-nowrap pl-[2px] leading-[19px] text-[#a8a8a8]">
                  <span>神驰机电 (日线)</span>
                  <span className="mx-1"><Chevron /></span>
                  <span>LONG(3,5,10,0,-26,1,0,0,1,99,93.82,66.18,50,33.82,6.18,1)</span>
                  <span className="ml-1 flex gap-2">{MAIN_HEAD.map(([t, c]) => <span key={t} className={c}>{t}</span>)}</span>
                  <span className="ml-9 flex gap-1.5">{MAIN_LINES.map(([t, c]) => <span key={t} className={c}>{t}</span>)}</span>
                </div>
                <p className="absolute bottom-[11px] left-[1px] leading-[18px] text-[#686868]">用到未来数据</p>
                <StatsDialog />
              </div>
              <Axis className="flex flex-col items-end justify-between pb-[51px] pr-[5px] pt-[17px] leading-5">
                <Ticks from={29} step={20.69} count={33} height={750} />
                {Array.from({ length: 17 }, (_, k) => <span key={k}>{(52 - 2 * k).toFixed(2)}</span>)}
                <div className="absolute inset-x-0 top-[130px] h-[17px] border-b border-[#a01414] bg-[#00007c] leading-4 text-[#b8b8f8]">46.35</div>
              </Axis>
            </section>

            <section className="relative flex h-[124px] border-b border-[#a01414]">
              <div className="relative min-w-0 flex-1">
                <VolumeChart />
                <div className="relative flex items-center whitespace-nowrap pl-[2px] leading-[18px]">
                  <Chevron />
                  <span className="ml-1 text-[#a8a8a8]">VOL-TDX(5,10)</span>
                  <span className="ml-2 text-[#f0f0f0]">VVOL: 7261.00</span>
                  <span className="ml-3 text-[#e8e820]">VOLUME: 7261.00</span>
                  <span className="ml-2 text-[#e8e820]">MA5: 13827.64</span>
                  <span className="ml-2 text-[#d020d0]">MA10: 10866.80</span>
                </div>
              </div>
              <Axis className="flex flex-col items-end pr-1 pt-2 leading-[25px]">
                <Ticks from={21} step={12.3} count={7} height={123} />
                <span>20000</span><span>15000</span><span>10000</span><span>5000</span>
                <span className="absolute bottom-0 left-0 h-[21px] w-[32px] border-r border-t border-[#a01414] leading-[17px]">X10</span>
              </Axis>
            </section>

            <section className="relative flex h-[126px] border-b border-[#a01414]">
              <div className="relative min-w-0 flex-1">
                <MacdChart />
                <div className="relative flex items-center whitespace-nowrap pl-[2px] leading-[18px]">
                  <Chevron />
                  <span className="ml-1 text-[#a8a8a8]">MACD(12,26,9)</span>
                  <span className="ml-2 text-[#f0f0f0]">DIF: -0.41</span>
                  <span className="ml-2 text-[#e8e820]">DEA: -0.48</span>
                  <span className="ml-2 text-[#d020d0]">MACD: 0.14</span>
                </div>
              </div>
              <Axis className="flex flex-col items-end pr-[5px] pt-[25px] leading-5">
                <Ticks from={37} step={50} count={1} height={125} />
                <span>5.00</span>
              </Axis>
            </section>

            <section className="flex h-[251px] border-b border-[#a01414] text-[#e4e4e4]">
              <div className="flex min-w-0 flex-1 flex-col">
                <div className="flex whitespace-nowrap leading-[18px]">
                  <span className="flex w-[30%] items-center gap-1 pl-[2px] text-[#a8a8a8]"><Chevron />古道基本面(1,1,1,1,1,1,1,17.50,95,1)</span>
                  <span className="flex gap-[5px]">{BASIC_HEAD.map((t) => <span key={t}>{t}</span>)}</span>
                </div>
                <div className="mt-[9px] grid flex-1 grid-cols-[7fr_7fr_7fr_7fr_7fr_5fr] whitespace-nowrap pl-[2px]">
                  {BASICS.map((b) => (
                    <div key={b.title} className="flex min-w-0 flex-col">
                      <h3 className="leading-[17px]">{b.title}</h3>
                      <ul className="flex flex-1 flex-col pl-5">
                        {b.rows.map(([l, v]) => (
                          <li key={l} className="flex-1 leading-5">
                            {l}<span className="font-['Noto_Sans_CJK_TC',sans-serif] leading-none">：</span>{v}
                          </li>
                        ))}
                      </ul>
                    </div>
                  ))}
                </div>
                <p className="h-[14px] pl-[1px] leading-[14px] text-[#585858]">公式[古道基本面]运行很耗时</p>
              </div>
              <Axis className="border-t" />
            </section>

            <section className="flex h-4 border-b border-[#a01414]">
              <div className="relative min-w-0 flex-1">
                <svg className="absolute inset-0 h-full w-full" viewBox="34 1284 2016 15" preserveAspectRatio="none" shapeRendering="crispEdges">
                  <g fill="#c01818">
                    {MINOR.map((x) => <rect key={x} x={x} y={1284} width={1} height={3} />)}
                    {MONTHS.map(([x]) => <rect key={x} x={x} y={1284} width={1} height={15} />)}
                  </g>
                  <g fontSize={16} fill="#e04444" style={chartFont}>
                    <text x={38} y={1297}>2019年</text>
                    {MONTHS.map(([x, m]) => <text key={x} x={x + 1} y={1297}>{m}</text>)}
                  </g>
                  <rect x={388} y={1284} width={110} height={15} fill="#00007c" />
                  <text x={389} y={1297} fontSize={16} fill="#b8b8f8" style={chartFont}>2020/02/27/四</text>
                </svg>
              </div>
              <Axis className="text-center leading-[17px]"><span className="text-[#b8b8b8]">日线</span></Axis>
            </section>

            <section className="flex h-[18px] border-b border-[#a01414]">
              <nav className="flex min-w-0 flex-1 whitespace-nowrap text-sm leading-[17px] text-[#b8b8b8]">
                <button type="button" className="w-[38px] shrink-0 border-r border-[#a01414]">指标A</button>
                <button type="button" className="w-[38px] shrink-0 border-r border-[#a01414]">指标B</button>
                <button type="button" className="w-[34px] shrink-0 border-r border-[#a01414]">模 板</button>
                <Cell active>管理</Cell><Cell>另存为</Cell><Cell>绑定到</Cell><Cell>经典指标</Cell><Cell>最简指标</Cell><Cell>基本指标</Cell>
                <Cell>金叉类指标</Cell><Cell>涨停类指标</Cell><Cell>多指标分析</Cell><Cell>趋势相对论</Cell><Cell>基本面指标</Cell>
              </nav>
              <Axis className="flex text-center text-sm leading-[17px]">
                <button type="button" className="flex-1 border-r border-[#a01414] text-[#c8c8c8]">+</button>
                <button type="button" className="flex-1 border-r border-[#a01414] text-[#c8c8c8]">-</button>
                <button type="button" className="flex-1 text-[#c8c8c8]">Z</button>
              </Axis>
            </section>

            <nav className="flex h-4 border-r border-[#a01414] pl-[3px] pt-[1px]">
              {['分析图', '分时图', '操盘必读', '股吧', '全球', '综合排名', '龙虎榜', '资金流向', '主力控股', '15秒', '1分钟', '3分', '5分', '15分钟', '30分', '60分', '日', '周', '月', '笔'].map((t) => (
                <Tab key={t} active={t === '日'}>{t}</Tab>
              ))}
            </nav>
          </main>
          <CostPanel />
        </div>
      </div>

      <div className="w-[10px] shrink-0" />
      <Sliver />
    </div>
  );
}
